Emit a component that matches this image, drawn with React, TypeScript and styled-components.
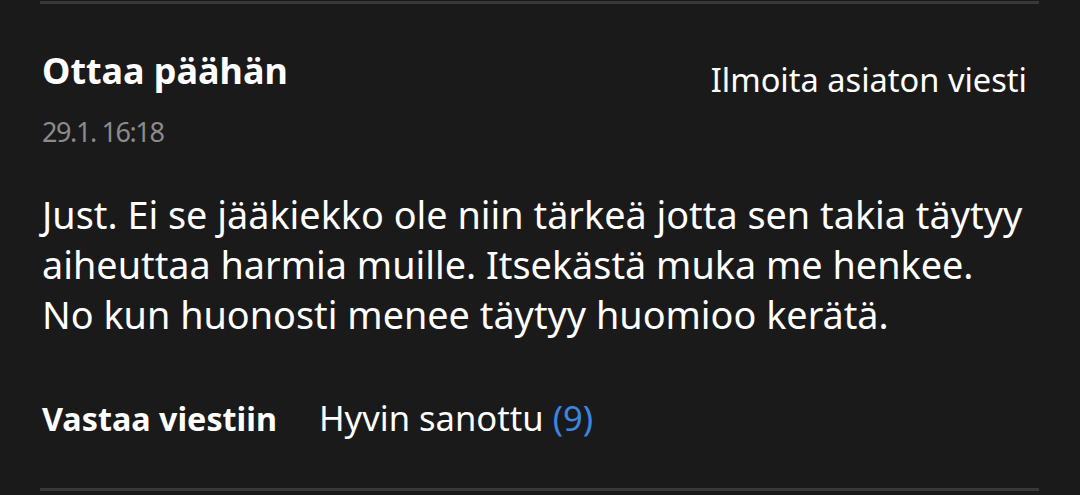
import React from "react";
import styled, { createGlobalStyle } from "styled-components";

const GlobalStyle = createGlobalStyle`
  html, body { margin: 0; padding: 0; background: #1a1a1a; }
  body { font-family: "Noto Sans", "Open Sans", sans-serif; color: #ffffff; }
  #root { min-height: 495px; }
`;

const Page = styled.div`
  padding-top: 1px;
  height: 494px;
  overflow: hidden;
`;

const Comment = styled.article`
  margin: 0 41px 0 40px;
  border-top: 3px solid #38383b;
  border-bottom: 3px solid #38383b;
  padding: 45px 12px 48px 2px;
  display: flex;
  flex-direction: column;
`;

const Header = styled.header`
  display: flex;
  justify-content: space-between;
  align-items: flex-start;
`;

const Meta = styled.div`
  display: flex;
  flex-direction: column;
  gap: 24px;
`;

const Author = styled.h2`
  margin: 0;
  font-size: 35.9px;
  font-weight: 700;
  line-height: 44px;
`;

const Time = styled.time`
  font-size: 27px;
  line-height: 30px;
  letter-spacing: -1.4px;
  color: #8b8b8b;
`;

const Report = styled.button`
  margin-top: 9px;
  background: none;
  border: 0;
  padding: 0;
  font-family: inherit;
  color: #ffffff;
  font-size: 32.6px;
  line-height: 44px;
  cursor: pointer;
`;

const Body = styled.p`
  margin: 43px 0 0;
  font-size: 37.8px;
  line-height: 50px;
  white-space: pre-line;
`;

const Actions = styled.div`
  margin-top: 56px;
  display: flex;
  align-items: baseline;
  gap: 42px;
`;

const Reply = styled.button`
  background: none;
  border: 0;
  padding: 0;
  font-family: inherit;
  color: #ffffff;
  font-weight: 700;
  font-size: 32.3px;
  line-height: 44px;
`;

const Like = styled.button`
  background: none;
  border: 0;
  padding: 0;
  font-family: inherit;
  color: #ffffff;
  font-size: 34.6px;
  line-height: 44px;
`;

const Count = styled.span`
  color: #3a86e0;
`;

export default function App() {
  return (
    <>
      <GlobalStyle />
      <Page>
        <Comment>
          <Header>
            <Meta>
              <Author>Ottaa päähän</Author>
              <Time>29.1. 16:18</Time>
            </Meta>
            <Report>Ilmoita asiaton viesti</Report>
          </Header>
          <Body>
            {"Just. Ei se jääkiekko ole niin tärkeä jotta sen takia täytyy\naiheuttaa harmia muille. Itsekästä muka me henkee.\nNo kun huonosti menee täytyy huomioo kerätä."}
          </Body>
          <Actions>
            <Reply>Vastaa viestiin</Reply>
            <Like>
              Hyvin sanottu <Count>(9)</Count>
            </Like>
          </Actions>
        </Comment>
      </Page>
    </>
  );
}
